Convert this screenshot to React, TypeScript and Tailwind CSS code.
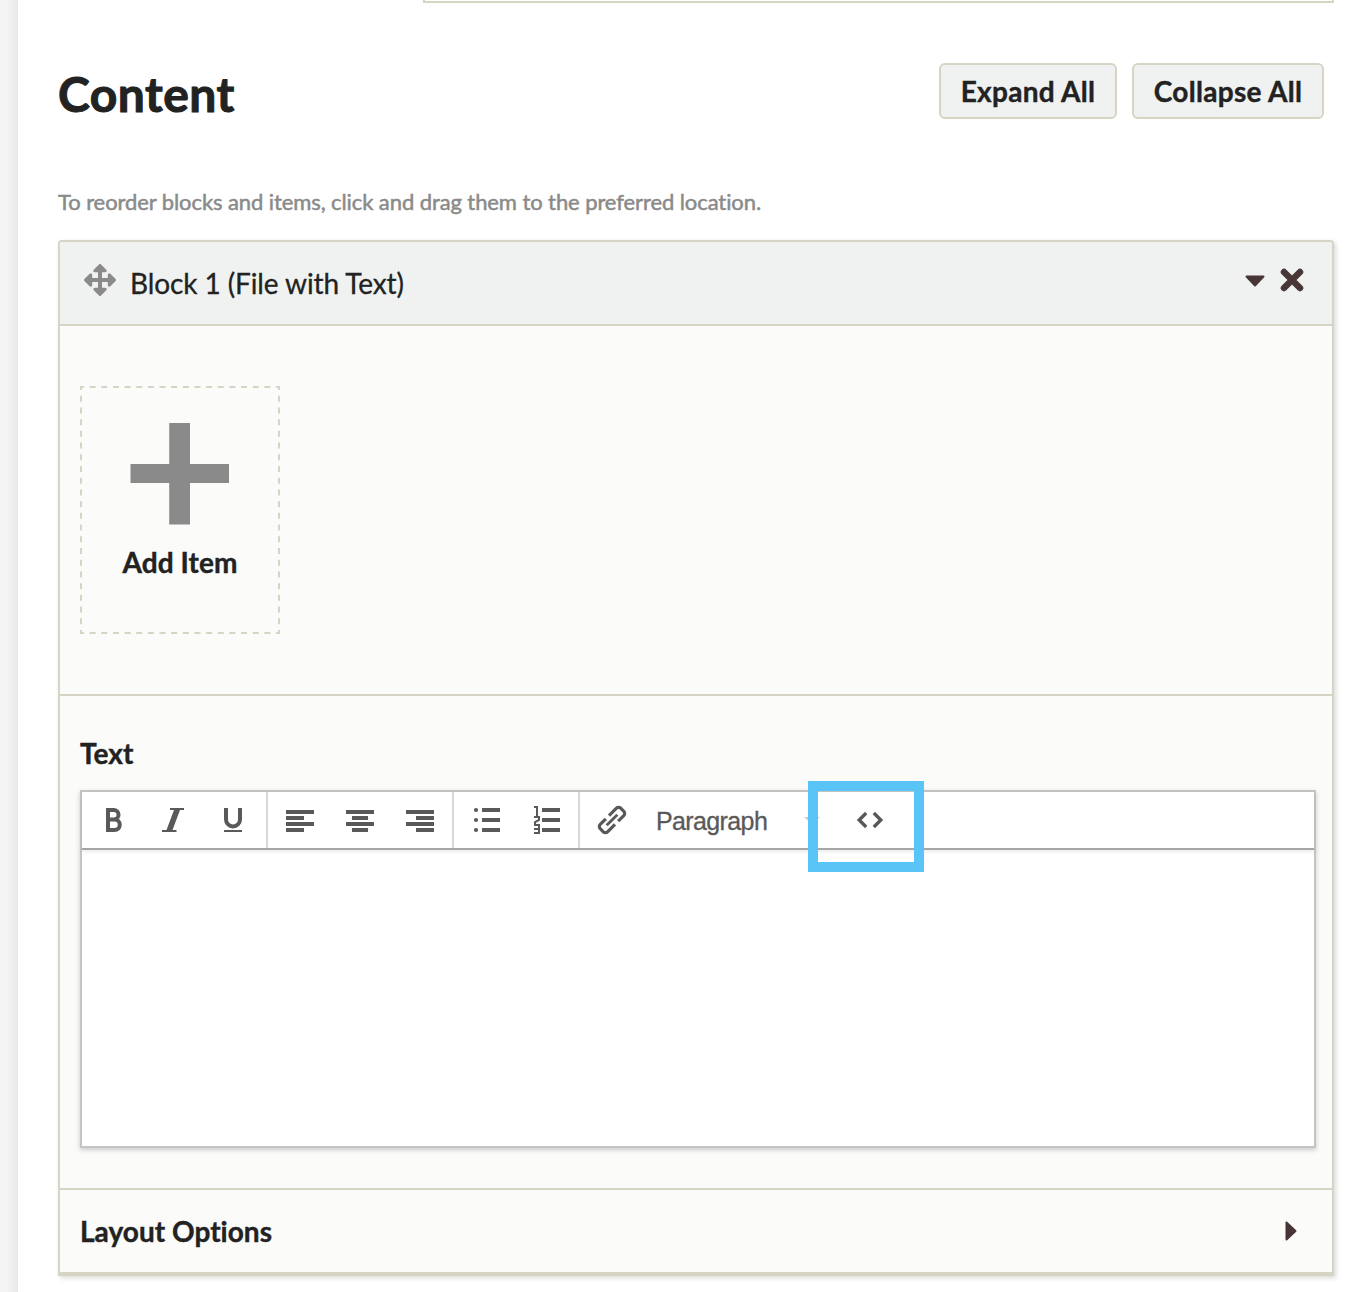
import React from "react";

const Ico = ({ d, children }: { d?: string; children?: React.ReactNode }) => (
  <svg width="60" height="56" viewBox="0 0 60 56" fill="#595959" className="shrink-0">
    {d && <path d={d} />}
    {children}
  </svg>
);

function Toolbar() {
  return (
    <div className="flex h-[58px] border-b-2 border-[#a6a6a6] bg-white shadow-[0_2px_4px_rgba(0,0,0,0.08)]">
      <div className="flex w-[186px] border-r-2 border-[#d9d9d9]">
        <Ico>
          <path fill="none" stroke="#595959" strokeWidth="4" d="M26 18h5.800a4.300 4.300 0 0 1 0 9.500H26m0 0h6.500a5.200 5.200 0 0 1 0 10.500H26M26 16v24" />
        </Ico>
        <Ico d="M28 16h14v2h-4l-7.500 20h4v2H20v-2h4.500l7.500-20H28z" />
        <Ico>
          <path fill="none" stroke="#595959" strokeWidth="4" d="M24 16v11.500a7 7 0 0 0 14 0V16" />
          <path d="M22 38h18v2H22z" />
        </Ico>
      </div>
      <div className="flex w-[186px] border-r-2 border-[#d9d9d9] pl-0.5">
        <Ico d="M16 18h28v4H16zM16 24h18v4H16zM16 30h28v4H16zM16 36h18v4H16z" />
        <Ico d="M16 18h28v4H16zM22 24h16v4H22zM16 30h28v4H16zM22 36h16v4H22z" />
        <Ico d="M16 18h28v4H16zM26 24h18v4H26zM16 30h28v4H16zM26 36h18v4H26z" />
      </div>
      <div className="flex w-[126px] border-r-2 border-[#d9d9d9] pl-0.5">
        <Ico d="M26 16h18v4H26zM26 26h18v4H26zM26 36h18v4H26z">
          <circle cx="20" cy="18" r="2.100" />
          <circle cx="20" cy="28" r="2.100" />
          <circle cx="20" cy="38" r="2.100" />
        </Ico>
        <Ico d="M26 16h18v4H26zM26 26h18v4H26zM26 36h18v4H26z">
          <path fill="none" stroke="#595959" strokeWidth="2" d="M18 15h3v10M18 25h5v3l-4 2v3M18 33h5v8h-5M18 37h5" />
        </Ico>
      </div>
      <div className="flex items-center">
        <Ico>
          <g fill="none" stroke="#595959" strokeWidth="3.200" strokeLinejoin="round" transform="translate(32 28) rotate(-45)">
            <path d="M-1 5.200h-10.500a3 3 0 0 1-3-3v-4.400a3 3 0 0 1 3-3H-3.500" />
            <path d="M1-5.200h10.500a3 3 0 0 1 3 3v4.400a3 3 0 0 1-3 3H3.500" />
            <path d="M-7.500 0h15" strokeWidth="2.800" />
          </g>
        </Ico>
        <div className="ml-4 flex w-[164px] items-center justify-between font-['Liberation_Sans',sans-serif] text-[25px] tracking-[-0.620px] text-[#595959] [-webkit-text-stroke:0.300px_#595959]">
          <span className="pt-[3px]">Paragraph</span>
          <svg width="16" height="8" viewBox="0 0 16 8" fill="#c4c9ce"><path d="M0 1h16L8 8z" /></svg>
        </div>
        <div className="ml-[18px]">
          <Ico>
            <path fill="none" stroke="#595959" strokeWidth="3.400" d="M28.200 21l-7 7 7 7M35.800 21l7 7-7 7" />
          </Ico>
        </div>
      </div>
    </div>
  );
}

export default function App() {
  return (
    <div className="flex h-[1292px] w-[1368px] overflow-hidden bg-white font-[Lato,sans-serif] text-[#222] [font-variant-ligatures:none]">
      <div className="w-[18px] shrink-0 bg-linear-to-r from-[#f4f4f4] from-40% to-[#e8e8e8]" />
      <main className="w-[1316px] pl-10">
        <div className="ml-[365px] h-[3px] border-2 border-t-0 border-[#d6d5c3]" />
        <div className="mt-[60px] flex h-14 items-start justify-between pr-2.5">
          <h1 className="mt-px text-[48px] leading-[60px] font-bold tracking-[0.500px] [-webkit-text-stroke:1px_#222]">Content</h1>
          <div className="flex gap-[15px] text-[28px] font-bold tracking-[0.300px] [-webkit-text-stroke:0.400px_#222]">
            <button className="h-14 w-[178px] rounded-md border-2 border-[#d6d5c3] bg-[#f0f2f1]">Expand All</button>
            <button className="h-14 w-[192px] rounded-md border-2 border-[#d6d5c3] bg-[#f0f2f1]">Collapse All</button>
          </div>
        </div>
        <p className="mt-[68px] h-[53px] text-[22px] leading-[30px] font-normal tracking-[-0.090px] text-[#8a8a8a] [-webkit-text-stroke:0.500px_#8a8a8a]">
          To reorder blocks and items, click and drag them to the preferred location.
        </p>
        <section className="h-[1036px] rounded-t border-2 border-b-4 border-[#d6d5c3] bg-[#fbfbf9] shadow-[2px_2px_5px_rgba(0,0,0,0.15)]">
          <header className="flex h-[84px] items-center rounded-t-sm border-b-2 border-[#d6d5c3] bg-[#f0f2f1] pl-6">
            <svg width="32" height="32" viewBox="0 0 32 32" className="mb-1.5" fill="#8a8a8a" stroke="#8a8a8a" strokeLinejoin="round">
              <path strokeWidth="4" fill="none" d="M16 5v22M5 16h22" />
              <path strokeWidth="3" d="M16 1.500l5.200 5.200h-10.400zM16 30.500l5.200-5.200h-10.400zM1.500 16l5.200-5.200v10.400zM30.500 16l-5.200-5.200v10.400z" />
            </svg>
            <span className="ml-3.5 text-[28px] tracking-[-0.100px] [-webkit-text-stroke:0.300px_#222]">Block 1 (File with Text)</span>
            <div className="mr-7 mb-1.5 ml-auto flex items-center gap-[15px]">
              <svg width="20" height="12" viewBox="0 0 20 12" fill="#483535" stroke="#483535" strokeWidth="2" strokeLinejoin="round" className="mt-0.5">
                <path d="M1.500 1.500h17L10 10.500z" />
              </svg>
              <svg width="24" height="24" viewBox="0 0 24 24" stroke="#483535" strokeWidth="6.500" strokeLinecap="round">
                <path d="M4 4l16 16M20 4L4 20" />
              </svg>
            </div>
          </header>
          <div className="h-[370px] border-b-2 border-[#d6d5c3] px-5 pt-[60px]">
            <div className="relative flex h-[248px] w-[200px] flex-col items-center pt-[37px]">
              <svg width="200" height="248" viewBox="0 0 200 248" className="absolute inset-0" fill="none" stroke="#d6d5c3" strokeWidth="2">
                <path strokeDasharray="6 5.647" strokeDashoffset="3" d="M1 1h198M1 247h198" />
                <path strokeDasharray="6 5.714" strokeDashoffset="3" d="M1 1v246M199 1v246" />
                <path d="M0 1h4M196 1h4M0 247h4M196 247h4M1 0v4M199 0v4M1 244v4M199 244v4" />
              </svg>
              <svg width="100" height="102" viewBox="0 0 100 102" fill="#8a8a8a">
                <path d="M39.200 0H60v41h39v19H60v41.500H39.200V60H.5V41h38.700z" />
              </svg>
              <span className="mt-5 text-[28px] leading-[34px] font-bold tracking-[0.100px] [-webkit-text-stroke:0.400px_#222]">Add Item</span>
            </div>
          </div>
          <div className="h-[494px] border-b-2 border-[#d6d5c3] px-5 pt-10 pr-4">
            <h2 className="h-[54px] text-[28px] leading-[34px] font-bold tracking-[0.100px] [-webkit-text-stroke:0.400px_#222]">Text</h2>
            <div className="relative h-[358px] border-2 border-[#c4c4c4] bg-white shadow-[0_2px_5px_rgba(0,0,0,0.2)]">
              <Toolbar />
              <div className="absolute top-[-11px] left-[726px] h-[91px] w-[116px] border-10 border-[#5bc4f6]" />
            </div>
          </div>
          <footer className="flex h-[82px] items-center justify-between pr-[35px] pl-5">
            <h2 className="text-[28px] font-bold tracking-[0.030px] [-webkit-text-stroke:0.400px_#222]">Layout Options</h2>
            <svg width="12" height="20" viewBox="0 0 12 20" fill="#483535" stroke="#483535" strokeWidth="2" strokeLinejoin="round">
              <path d="M1.500 1.500v17L10.500 10z" />
            </svg>
          </footer>
        </section>
      </main>
    </div>
  );
}
